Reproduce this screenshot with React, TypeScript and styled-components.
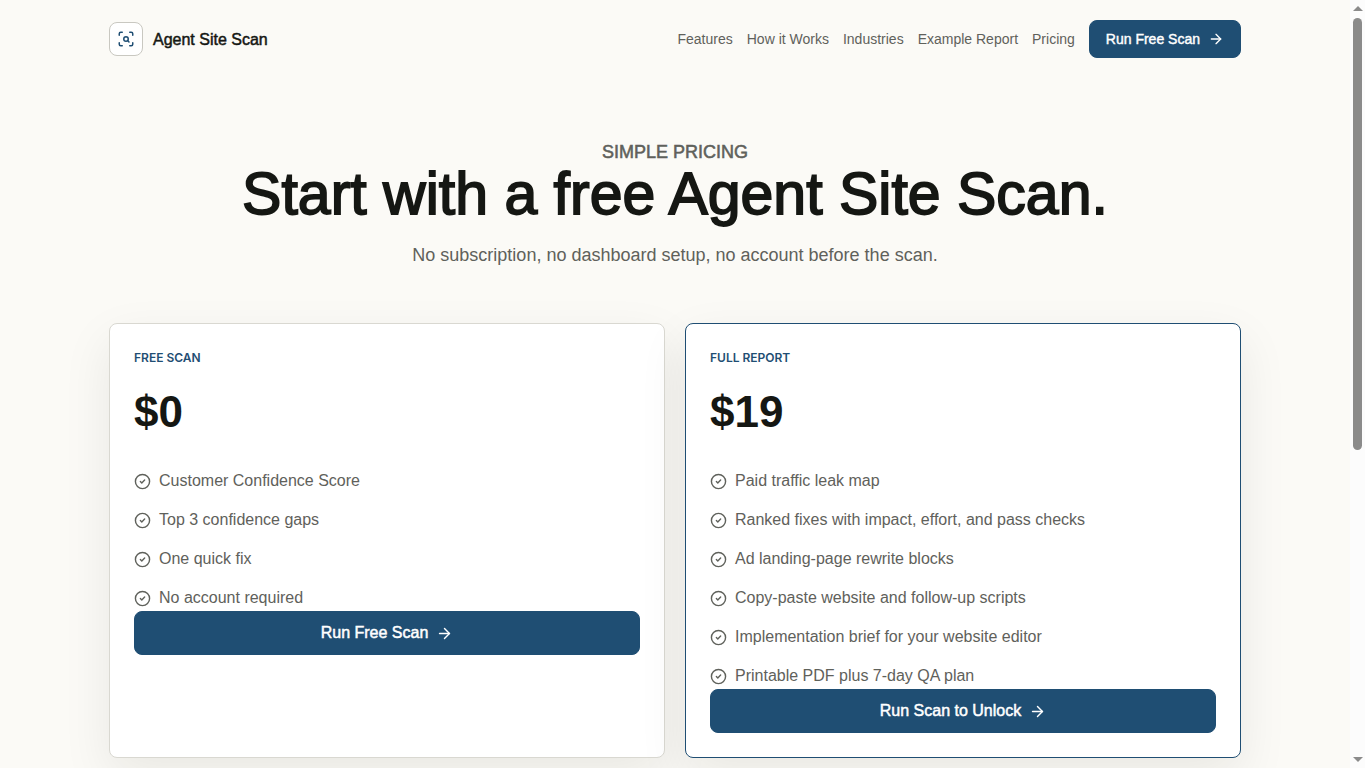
import React from "react";
import styled, { createGlobalStyle, css } from "styled-components";
import { ArrowRight, CircleCheck, ScanSearch } from "lucide-react";

const color = {
  paper: "#fbfaf6",
  card: "#ffffff",
  ink: "#151713",
  muted: "#5f615b",
  line: "#d9d8d1",
  navy: "#1f4e73",
  track: "#fcfcfc",
  thumb: "#8b8b8b",
};

const GlobalStyle = createGlobalStyle`
  *, *::before, *::after { box-sizing: border-box; }
  body {
    margin: 0;
    background: ${color.paper};
    color: ${color.ink};
    font-family: "Liberation Sans", Arial, sans-serif;
    font-size: 16px;
    line-height: 27px;
  }
`;

/* Medium weight: the regular face thickened by a thin outline. */
const medium = css`
  font-weight: 400;
  -webkit-text-stroke: 0.03em currentColor;
`;

const Shell = styled.div`
  display: flex;
  height: 100vh;
  overflow: hidden;
`;

const Page = styled.div`
  flex: 1;
  min-width: 0;
  overflow: hidden;
`;

const ScrollBar = styled.div`
  display: flex;
  flex-direction: column;
  align-items: center;
  width: 15px;
  padding: 6px 0;
  gap: 7px;
  background: ${color.track};
`;

const ScrollArrow = styled.span<{ $down?: boolean }>`
  border: 5px solid transparent;
  border-width: ${(p) => (p.$down ? "5px 5px 0" : "0 5px 5px")};
  border-top-color: ${(p) => (p.$down ? color.thumb : "transparent")};
  border-bottom-color: ${(p) => (p.$down ? "transparent" : color.thumb)};
`;

const ScrollTrack = styled.div`
  flex: 1;
  width: 9px;
`;

const ScrollThumb = styled.div`
  height: 59%;
  border-radius: 5px;
  background: ${color.thumb};
`;

const Container = styled.div`
  width: 100%;
  max-width: 1180px;
  margin: 0 auto;
  padding: 0 24px;
`;

const Header = styled(Container).attrs({ as: "header" })`
  display: flex;
  align-items: center;
  justify-content: space-between;
  gap: 24px;
  padding-top: 20px;
  padding-bottom: 20px;
`;

const Brand = styled.a`
  display: flex;
  align-items: center;
  gap: 10px;
  color: ${color.ink};
  text-decoration: none;
  ${medium}
`;

const BrandMark = styled.span`
  display: grid;
  place-items: center;
  width: 34px;
  height: 34px;
  border: 1px solid #c9c8c1;
  border-radius: 8px;
  background: ${color.card};
  color: ${color.navy};
`;

const Nav = styled.nav`
  display: flex;
  align-items: center;
  gap: 14px;
  font-size: 14px;
`;

const NavLink = styled.a`
  color: ${color.muted};
  text-decoration: none;
  white-space: nowrap;
`;

const Button = styled.button<{ $block?: boolean }>`
  display: inline-flex;
  align-items: center;
  justify-content: center;
  gap: 8px;
  width: ${(p) => (p.$block ? "100%" : "auto")};
  height: ${(p) => (p.$block ? "44px" : "38px")};
  padding: 0 16px;
  border: 1px solid ${color.navy};
  border-radius: 8px;
  background: ${color.navy};
  color: #ffffff;
  font-family: inherit;
  font-size: ${(p) => (p.$block ? "16px" : "14px")};
  white-space: nowrap;
  cursor: pointer;
  ${medium}
`;

const Hero = styled.section`
  padding-top: 62px;
  text-align: center;
`;

const Eyebrow = styled.p`
  margin: 0;
  color: ${color.muted};
  font-size: 18px;
  line-height: 24px;
  text-transform: uppercase;
  ${medium}
`;

const Title = styled.h1`
  margin: 0;
  font-size: 59px;
  line-height: 60px;
  ${medium}
`;

const Lead = styled.p`
  margin: 16px 0 0;
  color: ${color.muted};
  font-size: 18px;
  line-height: 30px;
`;

const Plans = styled.div`
  display: grid;
  grid-template-columns: repeat(2, minmax(0, 1fr));
  gap: 20px;
  padding: 53px 0;
`;

const Card = styled.article<{ $featured?: boolean }>`
  padding: 24px;
  border: 1px solid ${(p) => (p.$featured ? color.navy : color.line)};
  border-radius: 8px;
  background: ${color.card};
  box-shadow: 0 18px 50px rgba(21, 23, 19, 0.08);
`;

const PlanName = styled.h2`
  margin: 0;
  color: ${color.navy};
  font-family: Inter, sans-serif;
  font-size: 12px;
  font-weight: 600;
  line-height: 20px;
  text-transform: uppercase;
`;

const Price = styled.p`
  margin: 19px 0 31px;
  font-size: 44px;
  font-weight: 700;
  line-height: 50px;
`;

const Features = styled.ul`
  display: grid;
  gap: 13px;
  margin: 0;
  padding: 0;
  list-style: none;
  color: ${color.muted};
  line-height: 26px;
`;

const Feature = styled.li`
  display: flex;
  align-items: center;
  gap: 8px;
`;

const links = ["Features", "How it Works", "Industries", "Example Report", "Pricing"];

const plans = [
  {
    name: "Free Scan",
    price: "$0",
    action: "Run Free Scan",
    featured: false,
    features: ["Customer Confidence Score", "Top 3 confidence gaps", "One quick fix", "No account required"],
  },
  {
    name: "Full Report",
    price: "$19",
    action: "Run Scan to Unlock",
    featured: true,
    features: [
      "Paid traffic leak map",
      "Ranked fixes with impact, effort, and pass checks",
      "Ad landing-page rewrite blocks",
      "Copy-paste website and follow-up scripts",
      "Implementation brief for your website editor",
      "Printable PDF plus 7-day QA plan",
    ],
  },
];

export default function App() {
  return (
    <Shell>
      <GlobalStyle />
      <Page>
        <Header>
          <Brand href="#">
            <BrandMark>
              <ScanSearch size={18} aria-hidden />
            </BrandMark>
            Agent Site Scan
          </Brand>
          <Nav>
            {links.map((label) => (
              <NavLink key={label} href="#">
                {label}
              </NavLink>
            ))}
            <Button type="button">
              Run Free Scan
              <ArrowRight size={16} aria-hidden />
            </Button>
          </Nav>
        </Header>
        <Container as="main">
          <Hero>
            <Eyebrow>Simple pricing</Eyebrow>
            <Title>Start with a free Agent Site Scan.</Title>
            <Lead>No subscription, no dashboard setup, no account before the scan.</Lead>
          </Hero>
          <Plans>
            {plans.map((plan) => (
              <Card key={plan.name} $featured={plan.featured}>
                <PlanName>{plan.name}</PlanName>
                <Price>{plan.price}</Price>
                <Features>
                  {plan.features.map((text) => (
                    <Feature key={text}>
                      <CircleCheck size={17} aria-hidden />
                      {text}
                    </Feature>
                  ))}
                </Features>
                <Button type="button" $block>
                  {plan.action}
                  <ArrowRight size={17} aria-hidden />
                </Button>
              </Card>
            ))}
          </Plans>
        </Container>
      </Page>
      <ScrollBar aria-hidden>
        <ScrollArrow />
        <ScrollTrack>
          <ScrollThumb />
        </ScrollTrack>
        <ScrollArrow $down />
      </ScrollBar>
    </Shell>
  );
}
